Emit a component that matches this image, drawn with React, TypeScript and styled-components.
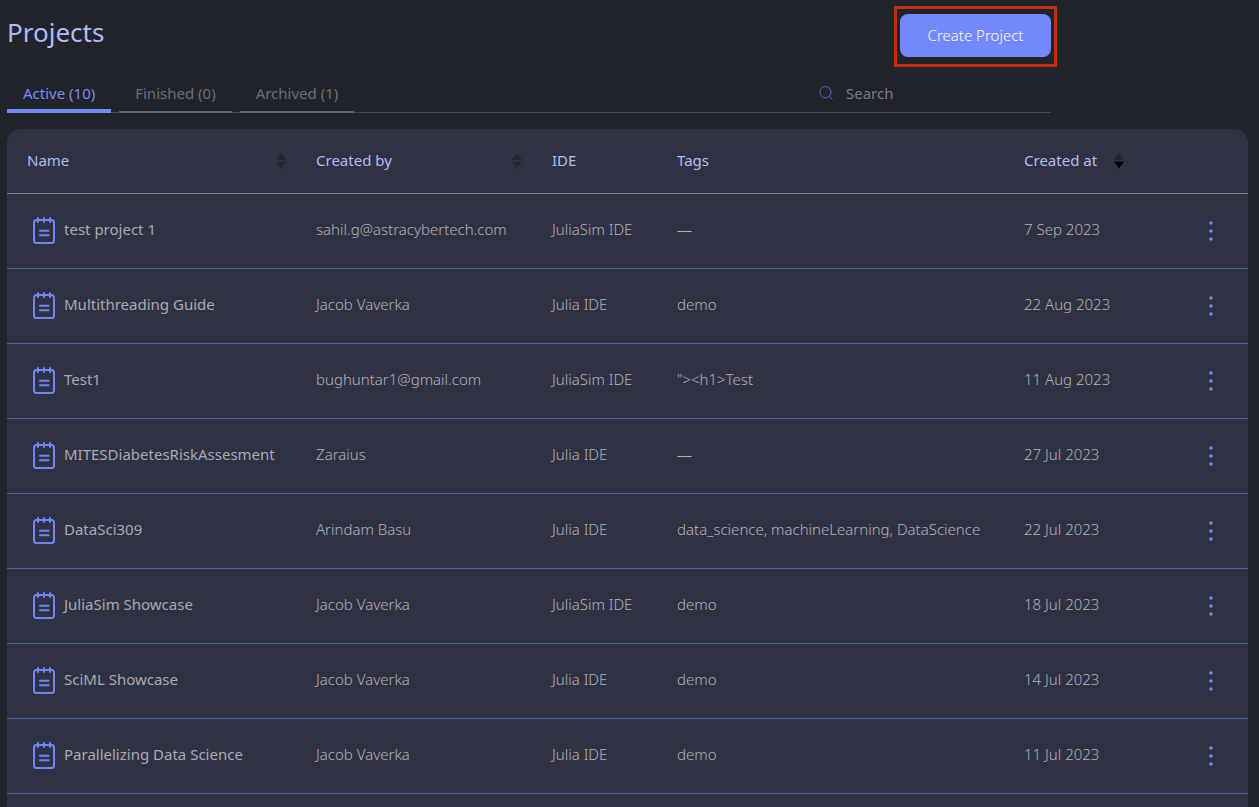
import React from "react";
import styled, { createGlobalStyle } from "styled-components";

const GlobalStyle = createGlobalStyle`
  *, *::before, *::after { box-sizing: border-box; }
  body {
    margin: 0;
    background: #20232a;
    color: #b2b3bc;
    font-family: "Noto Sans", "Open Sans", sans-serif;
    font-size: 15px;
    line-height: 24px;
  }
  button, input { font: inherit; }
`;

const Page = styled.main`
  display: flex;
  flex-direction: column;
  min-height: 100vh;
  padding: 0 11px 0 7px;
`;

const Top = styled.header`
  margin-right: 197px;
`;

const TitleRow = styled.div`
  display: flex;
  justify-content: space-between;
  align-items: flex-start;
  padding-top: 14px;
`;

const Title = styled.h1`
  margin: 0;
  color: #b3bbf5;
  font-size: 26px;
  font-weight: 400;
  line-height: 36px;
`;

const CreateButton = styled.button`
  position: relative;
  min-width: 151px;
  height: 43px;
  padding: 0 24px 2px;
  border: 0;
  border-radius: 8px;
  background: #7389fb;
  color: #ffffff;
  font-weight: 300;
  cursor: pointer;

  &::after {
    content: "";
    position: absolute;
    inset: -8px -6px -10px;
    border: 3px solid #c82c10;
    pointer-events: none;
  }
`;

const Bar = styled.div`
  display: flex;
  justify-content: space-between;
  align-items: flex-end;
  height: 56px;
  box-shadow: inset 0 -1px #454859;
`;

const Tabs = styled.div`
  display: flex;
  gap: 8px;
`;

const Tab = styled.button<{ $active?: boolean }>`
  height: 38px;
  padding: 0 16px 2px;
  border: 0;
  background: none;
  box-shadow: inset 0 ${(p) => (p.$active ? "-4px #7389fb" : "-2px #62646f")};
  color: ${(p) => (p.$active ? "#7b8df8" : "#6c6e7a")};
  cursor: pointer;
`;

const Search = styled.label`
  display: flex;
  align-items: center;
  gap: 13px;
  width: 232px;
  height: 38px;
  padding-bottom: 2px;
`;

const SearchInput = styled.input`
  flex: 1;
  min-width: 0;
  padding: 0;
  border: 0;
  outline: 0;
  background: none;
  color: #a3a4ae;
  &::placeholder { color: #7c7e89; opacity: 1; }
`;

const Card = styled.section`
  flex: 1;
  margin-top: 16px;
  border-radius: 14px 14px 0 0;
  background: #2f3242;
`;

const Table = styled.table`
  width: 100%;
  border-collapse: separate;
  border-spacing: 0;
  table-layout: fixed;
`;

const Col = styled.col<{ $width?: string }>`
  width: ${(p) => p.$width ?? "auto"};
`;

const HeadCell = styled.th`
  height: 65px;
  padding: 0 10px 2px 20px;
  border-bottom: 1px solid #7d7f8b;
  color: #b3bbf5;
  font-weight: 400;
  text-align: left;
`;

const HeadContent = styled.div`
  display: flex;
  justify-content: space-between;
  align-items: center;
`;

const Cell = styled.td`
  height: 75px;
  padding: 0 0 4px 20px;
  border-bottom: 1px solid #5264ae;
  font-weight: 300;
  white-space: nowrap;
`;

const NameContent = styled.div`
  display: flex;
  align-items: center;
  gap: 8px;
  padding-left: 5px;
  color: #a9aab3;
  font-weight: 400;
`;

const ActionCell = styled(Cell)`
  padding: 0 25px 2px 0;
  text-align: right;
`;

const IconButton = styled.button`
  display: inline-flex;
  padding: 0;
  border: 0;
  background: none;
  vertical-align: middle;
  cursor: pointer;
`;

const SortIcon = ({ active }: { active?: boolean }) => (
  <svg width="10" height="18" viewBox="0 0 10 18" aria-hidden="true">
    <path d="M5 2 10 9H0Z" fill="#24262f" />
    <path d="M0 10.5H10L5 17.5Z" fill={active ? "#000" : "#24262f"} />
  </svg>
);

const NotepadIcon = () => (
  <svg width="24" height="30" viewBox="0 0 24 30" fill="none" stroke="#7185f5" aria-hidden="true">
    <rect x="2" y="6" width="20" height="23" rx="2.5" strokeWidth="2" />
    <path d="M6 3.3V8.8M12 3.3V8.8M18 3.3V8.8" strokeWidth="2" />
    <path d="M8 16.8H16.5M8 21.2H16.5" strokeWidth="2" strokeLinecap="round" />
  </svg>
);

const DotsIcon = () => (
  <svg width="24" height="24" viewBox="0 0 24 24" fill="#7185f5" aria-hidden="true">
    <circle cx="12" cy="4" r="1.8" />
    <circle cx="12" cy="12" r="1.8" />
    <circle cx="12" cy="20" r="1.8" />
  </svg>
);

const SearchIcon = () => (
  <svg width="14" height="14" viewBox="0 0 14 14" fill="none" stroke="#5566cb" strokeLinecap="round" aria-hidden="true">
    <circle cx="6.4" cy="6.2" r="5.6" />
    <path d="M10.4 10.4 13.2 13.2" />
  </svg>
);

const tabs = ["Active (10)", "Finished (0)", "Archived (1)"];

const columns = [
  { label: "Name", width: "289px", sort: true },
  { label: "Created by", width: "236px", sort: true },
  { label: "IDE", width: "125px" },
  { label: "Tags" },
  { label: "Created at", width: "130px", sort: true, active: true },
];

const projects = [
  ["test project 1", "sahil.g@astracybertech.com", "JuliaSim IDE", "—", "7 Sep 2023"],
  ["Multithreading Guide", "Jacob Vaverka", "Julia IDE", "demo", "22 Aug 2023"],
  ["Test1", "bughuntar1@gmail.com", "JuliaSim IDE", "\"><h1>Test", "11 Aug 2023"],
  ["MITESDiabetesRiskAssesment", "Zaraius", "Julia IDE", "—", "27 Jul 2023"],
  ["DataSci309", "Arindam Basu", "Julia IDE", "data_science, machineLearning, DataScience", "22 Jul 2023"],
  ["JuliaSim Showcase", "Jacob Vaverka", "JuliaSim IDE", "demo", "18 Jul 2023"],
  ["SciML Showcase", "Jacob Vaverka", "Julia IDE", "demo", "14 Jul 2023"],
  ["Parallelizing Data Science", "Jacob Vaverka", "Julia IDE", "demo", "11 Jul 2023"],
];

export default function App() {
  return (
    <>
      <GlobalStyle />
      <Page>
        <Top>
          <TitleRow>
            <Title>Projects</Title>
            <CreateButton type="button">Create Project</CreateButton>
          </TitleRow>
          <Bar>
            <Tabs role="tablist">
              {tabs.map((label, i) => (
                <Tab key={label} type="button" role="tab" aria-selected={i === 0} $active={i === 0}>
                  {label}
                </Tab>
              ))}
            </Tabs>
            <Search>
              <SearchIcon />
              <SearchInput type="text" placeholder="Search" aria-label="Search" />
            </Search>
          </Bar>
        </Top>
        <Card>
          <Table>
            <colgroup>
              {columns.map((c) => (
                <Col key={c.label} $width={c.width} />
              ))}
              <Col $width="114px" />
            </colgroup>
            <thead>
              <tr>
                {columns.map((c) => (
                  <HeadCell key={c.label} scope="col">
                    <HeadContent>
                      {c.label}
                      {c.sort && (
                        <IconButton type="button" aria-label={`Sort by ${c.label}`}>
                          <SortIcon active={c.active} />
                        </IconButton>
                      )}
                    </HeadContent>
                  </HeadCell>
                ))}
                <HeadCell />
              </tr>
            </thead>
            <tbody>
              {projects.map(([name, ...rest]) => (
                <tr key={name}>
                  <Cell>
                    <NameContent>
                      <NotepadIcon />
                      {name}
                    </NameContent>
                  </Cell>
                  {rest.map((value, i) => (
                    <Cell key={i}>{value}</Cell>
                  ))}
                  <ActionCell>
                    <IconButton type="button" aria-label={`Actions for ${name}`}>
                      <DotsIcon />
                    </IconButton>
                  </ActionCell>
                </tr>
              ))}
            </tbody>
          </Table>
        </Card>
      </Page>
    </>
  );
}
